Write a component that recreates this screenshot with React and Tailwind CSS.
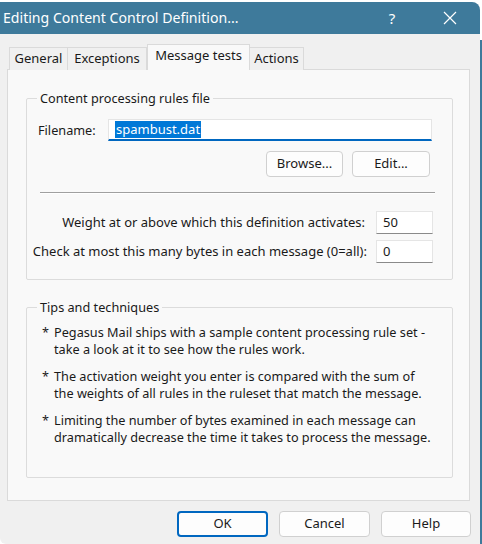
export default function App() {
  const font = { fontFamily: '"Noto Sans", "Liberation Sans", sans-serif' };
  return (
    <div className="relative w-[482px] h-[544px] overflow-hidden bg-white" style={font}>
      <div className="flex h-full">
        <div className="flex flex-col w-[480px] mt-[2px] rounded-tr-[8px] rounded-bl-[6px] overflow-hidden bg-[#f0f0f0]">
          {/* Title bar */}
          <div className="flex items-center h-[32px] bg-[#3e7a9b] text-white shrink-0">
            <div className="pl-[3px] text-[14.1px] flex-1">Editing Content Control Definition...</div>
            <div className="w-[40px] text-center text-[15px] mr-[18px]">?</div>
            <div className="w-[40px] flex justify-center mr-[10px]">
              <svg width="14" height="14" viewBox="0 0 14 14" stroke="white" strokeWidth="1.2">
                <path d="M1 1L13 13M13 1L1 13" />
              </svg>
            </div>
          </div>
          {/* Body */}
          <div className="flex flex-col pl-[7px] pt-[11px] text-[12.7px] text-[#1a1a1a]">
            {/* Tabs */}
            <div className="flex items-end h-[25px] pl-[2px] -mb-[1px] relative z-10 text-[13px]">
              <div className="w-[59px] h-[23px] flex items-center justify-center border border-b-0 border-[#dadada] bg-[#f0f0f0]">General</div>
              <div className="w-[79px] h-[23px] flex items-center justify-center border border-b-0 border-l-0 border-[#dadada] bg-[#f0f0f0]">Exceptions</div>
              <div className="w-[103px] h-[26px] flex items-center justify-center border border-b-0 border-[#dadada] bg-[#f9f9f9] pb-[3px]">Message tests</div>
              <div className="w-[54px] h-[23px] flex items-center justify-center border border-b-0 border-l-0 border-[#dadada] bg-[#f0f0f0]">Actions</div>
            </div>
            {/* Panel */}
            <div className="w-[463px] h-[432px] border border-[#dadada] bg-[#f9f9f9] pt-[19px] pl-[18px]">
              <fieldset className="w-[427px] min-w-0 h-[191px] border border-[#dcdcdc] rounded-[2px] pl-[11px] pr-[3px]">
                <legend className="ml-[-1px] px-[3px]">Content processing rules file</legend>
                <div className="flex items-center mt-[11px]">
                  <span className="w-[70px]">Filename:</span>
                  <div className="w-[324px] h-[22px] bg-white border border-[#e5e5e5] border-b-2 border-b-[#0067c0] flex items-center pl-[6px]">
                    <span className="bg-[#0078d7] text-white text-[13px] leading-[17px] px-[1px]">spambust.dat</span>
                  </div>
                </div>
                <div className="flex justify-end gap-[9px] mt-[10px] pr-[19px]">
                  <button className="w-[77px] h-[26px] rounded-[4px] border border-[#d0d0d0] bg-[#fdfdfd] text-[13px]">Browse...</button>
                  <button className="w-[78px] h-[26px] rounded-[4px] border border-[#d0d0d0] bg-[#fdfdfd] text-[13px]">Edit...</button>
                </div>
                <div className="mt-[15px] ml-[2px] w-[395px] border-t border-t-[#a0a0a0] border-b border-b-white"></div>
                <div className="flex items-center justify-end mt-[17px] pr-[16px] text-[13px] whitespace-nowrap">
                  <span className="mr-[11px]">Weight at or above which this definition activates:</span>
                  <div className="w-[57px] h-[23px] shrink-0 bg-white border border-[#e5e5e5] border-b-[#8a8a8a] flex items-center pl-[6px]">50</div>
                </div>
                <div className="flex items-center justify-end mt-[6px] pr-[16px] text-[13px] whitespace-nowrap">
                  <span className="mr-[9px]">Check at most this many bytes in each message (0=all):</span>
                  <div className="w-[57px] h-[23px] shrink-0 bg-white border border-[#e5e5e5] border-b-[#8a8a8a] flex items-center pl-[6px]">0</div>
                </div>
              </fieldset>
              <fieldset className="w-[427px] min-w-0 h-[180px] mt-[18px] border border-[#dcdcdc] rounded-[2px] pl-[15px] pr-[6px]">
                <legend className="ml-[-5px] px-[3px]">Tips and techniques</legend>
                <div className="flex flex-col gap-[10px] mt-[7px] leading-[17px]">
                  <div className="flex">
                    <span className="w-[12px] shrink-0">*</span>
                    <span>Pegasus Mail ships with a sample content processing rule set -<br />take a look at it to see how the rules work.</span>
                  </div>
                  <div className="flex">
                    <span className="w-[12px] shrink-0">*</span>
                    <span>The activation weight you enter is compared with the sum of<br />the weights of all rules in the ruleset that match the message.</span>
                  </div>
                  <div className="flex">
                    <span className="w-[12px] shrink-0">*</span>
                    <span>Limiting the number of bytes examined in each message can<br />dramatically decrease the time it takes to process the message.</span>
                  </div>
                </div>
              </fieldset>
            </div>
            {/* Bottom buttons */}
            <div className="flex justify-end gap-[11px] pr-[9px] mt-[10px] text-[13px]">
              <button className="w-[91px] h-[26px] rounded-[4px] border-2 border-[#0067c0] bg-[#fdfdfd]">OK</button>
              <button className="w-[91px] h-[26px] rounded-[4px] border border-[#d0d0d0] bg-[#fdfdfd]">Cancel</button>
              <button className="w-[90px] h-[26px] rounded-[4px] border border-[#d0d0d0] bg-[#fdfdfd]">Help</button>
            </div>
          </div>
        </div>
        <div className="w-[2px] bg-[#3e7a9b] mt-[40px]"></div>
      </div>
    </div>
  );
}
